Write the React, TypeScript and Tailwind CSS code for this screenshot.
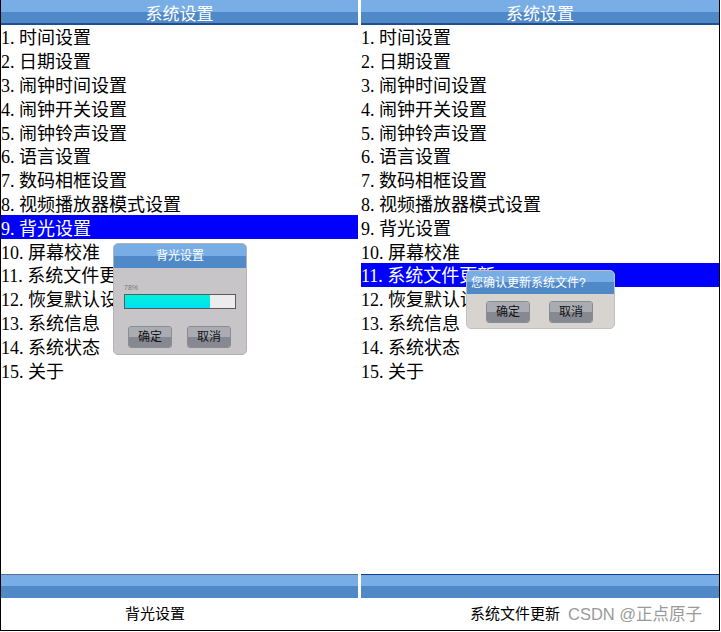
import React from "react";

const items = [
  "时间设置",
  "日期设置",
  "闹钟时间设置",
  "闹钟开关设置",
  "闹钟铃声设置",
  "语言设置",
  "数码相框设置",
  "视频播放器模式设置",
  "背光设置",
  "屏幕校准",
  "系统文件更新",
  "恢复默认设置",
  "系统信息",
  "系统状态",
  "关于",
];

const menuFont = { fontFamily: '"Liberation Serif", "Noto Sans CJK SC", serif' };
const uiFont = { fontFamily: '"Liberation Sans", "Noto Sans CJK SC", sans-serif' };

function TitleBar({ text }: { text: string }) {
  return (
    <div className="h-[25px] flex flex-col relative">
      <div className="h-[12px] bg-[#79ade6]" />
      <div className="h-[11px] bg-[#5089c7]" />
      <div className="h-[2px] bg-[#1f4f90]" />
      <div className="absolute inset-x-0 top-[2px] h-[24px] flex items-center justify-center text-white text-[17px] leading-none" style={uiFont}>
        {text}
      </div>
    </div>
  );
}

function BottomBar({ line }: { line: string }) {
  return (
    <div className="flex flex-col">
      <div className={`h-[1px] ${line}`} />
      <div className="h-[11px] bg-[#79ade6]" />
      <div className="h-[12px] bg-[#5089c7]" />
    </div>
  );
}

function Menu({ active }: { active: number }) {
  return (
    <div className="flex flex-col" style={menuFont}>
      {items.map((t, i) => (
        <div
          key={i}
          className={`h-[23.8px] flex items-center pt-[3px] text-[18px] leading-none whitespace-nowrap ${
            i === active ? "bg-[#0000ff] text-white" : "text-black"
          }`}
        >
          {i + 1}. {t}
        </div>
      ))}
    </div>
  );
}

function Btn({ text }: { text: string }) {
  return (
    <div className="w-[44px] h-[22px] rounded-[3px] overflow-hidden border border-[#8a8c92] flex flex-col relative">
      <div className="flex-1 bg-[#aaacb4]" />
      <div className="flex-1 bg-[#868991]" />
      <div className="absolute inset-0 flex items-center justify-center text-[12px] text-[#111] leading-none" style={uiFont}>
        {text}
      </div>
    </div>
  );
}

export default function App() {
  return (
    <div className="w-[721px] h-[632px] bg-white overflow-hidden">
      <div className="w-[720px] h-[631px] border-l border-r border-b border-black flex gap-[3px]">
        {/* left screen */}
        <div className="w-[357px] flex flex-col relative">
          <TitleBar text="系统设置" />
          <Menu active={8} />
          <div className="flex-1" />
          <BottomBar line="bg-[#56708e]" />
          <div className="h-[32px] flex items-center pl-[124px] text-[15px] text-black" style={uiFont}>
            背光设置
          </div>

          <div className="absolute left-[112px] top-[243px] w-[134px] h-[112px] rounded-[5px] overflow-hidden bg-[#c7c5c7] border border-[#b4b2b4] flex flex-col">
            <div className="h-[24px] flex flex-col relative">
              <div className="h-[12px] bg-[#79ade6]" />
              <div className="h-[12px] bg-[#5089c7]" />
              <div className="absolute inset-0 flex items-center justify-center text-white text-[12px] leading-none" style={uiFont}>
                背光设置
              </div>
            </div>
            <div className="pl-[10px] pt-[16px] h-[26px] text-[7px] leading-[8px] text-[#7a7a7a]" style={uiFont}>
              78%
            </div>
            <div className="ml-[10px] w-[112px] h-[15px] border border-[#5a5a5a] bg-[#ececec] flex">
              <div className="w-[85px] h-full bg-gradient-to-b from-[#00f2dc] to-[#00e0f2]" />
            </div>
            <div className="flex gap-[15px] pl-[14px] mt-[17px]">
              <Btn text="确定" />
              <Btn text="取消" />
            </div>
          </div>
        </div>

        {/* right screen */}
        <div className="flex-1 flex flex-col relative">
          <TitleBar text="系统设置" />
          <Menu active={10} />
          <div className="flex-1" />
          <BottomBar line="bg-[#0f3f8f]" />
          <div className="h-[32px] flex items-center pl-[109px] whitespace-nowrap" style={uiFont}>
            <span className="text-black text-[15px]">系统文件更新</span>
            <span className="ml-[8px] text-[#9a9a9a] text-[16.5px]">CSDN @正点原子</span>
          </div>

          <div className="absolute left-[105px] top-[270px] w-[149px] h-[59px] rounded-[5px] overflow-hidden bg-[#d7d4d0] border border-[#c4c1bd] flex flex-col">
            <div className="h-[23px] flex flex-col relative">
              <div className="h-[11px] bg-[#79ade6]" />
              <div className="h-[12px] bg-[#5089c7]" />
              <div className="absolute inset-0 flex items-center pl-[4px] text-white text-[12px] leading-none whitespace-nowrap" style={uiFont}>
                您确认更新系统文件?
              </div>
            </div>
            <div className="flex gap-[19px] pl-[19px] mt-[7px]">
              <Btn text="确定" />
              <Btn text="取消" />
            </div>
          </div>
        </div>
      </div>
    </div>
  );
}
